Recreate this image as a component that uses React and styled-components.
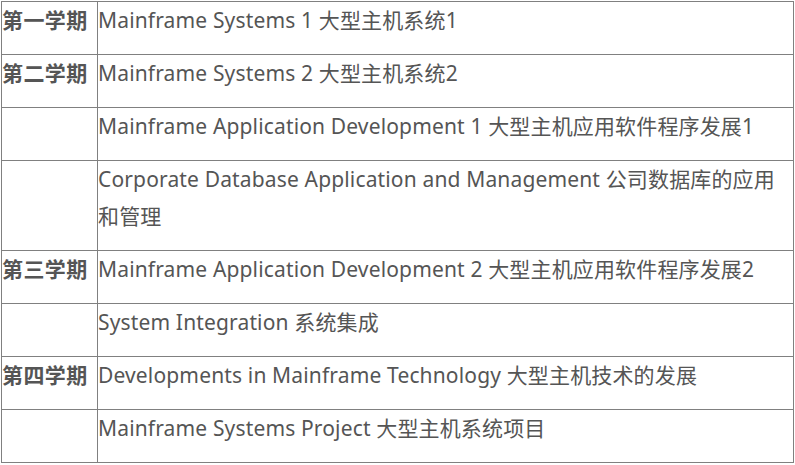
import React from "react";
import styled, { createGlobalStyle } from "styled-components";

const Global = createGlobalStyle`
  html, body { margin: 0; padding: 0; background: #fff; }
  body { padding: 1px 0 0 1px; }
`;

const Table = styled.table`
  border-collapse: collapse;
  width: 793px;
  table-layout: fixed;
  border: 1px solid #333;
  font-family: "Noto Sans", "Noto Sans CJK SC", sans-serif;
  font-size: 21px;
  letter-spacing: 0.15px;
  color: #555;
`;

const Row = styled.tr``;

const HeadCell = styled.td`
  border: 1px solid #808080;
  vertical-align: top;
  padding: 0;
  width: 95px;
  font-weight: 700;
  letter-spacing: 0.4px;
  white-space: nowrap;
`;

const Cell = styled.td`
  border: 1px solid #808080;
  vertical-align: top;
  padding: 0;
`;

const Text = styled.p`
  margin: 0 0 15px;
  line-height: 37px;
`;

const rows = [
  ["第一学期", "Mainframe Systems 1 大型主机系统1"],
  ["第二学期", "Mainframe Systems 2 大型主机系统2"],
  ["", "Mainframe Application Development 1 大型主机应用软件程序发展1"],
  ["", "Corporate Database Application and Management 公司数据库的应用和管理"],
  ["第三学期", "Mainframe Application Development 2 大型主机应用软件程序发展2"],
  ["", "System Integration 系统集成"],
  ["第四学期", "Developments in Mainframe Technology 大型主机技术的发展"],
  ["", "Mainframe Systems Project 大型主机系统项目"],
];

export default function App() {
  return (
    <>
      <Global />
      <Table>
        <tbody>
          {rows.map(([term, course], i) => (
            <Row key={i}>
              <HeadCell>
                <Text>{term}</Text>
              </HeadCell>
              <Cell>
                <Text>{course}</Text>
              </Cell>
            </Row>
          ))}
        </tbody>
      </Table>
    </>
  );
}
